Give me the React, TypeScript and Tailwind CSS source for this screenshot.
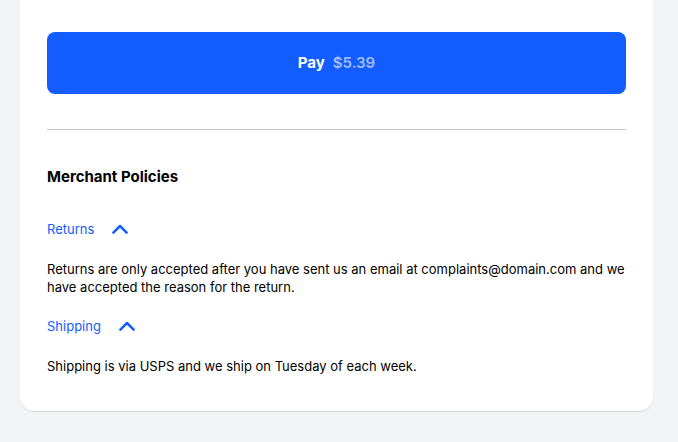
import { useState } from "react";

const policies = [
  {
    name: "Returns",
    text: "Returns are only accepted after you have sent us an email at complaints@domain.com and we have accepted the reason for the return.",
  },
  {
    name: "Shipping",
    text: "Shipping is via USPS and we ship on Tuesday of each week.",
  },
];

function Policy({ name, text }: { name: string; text: string }) {
  const [open, setOpen] = useState(true);

  return (
    <section>
      <button
        type="button"
        aria-expanded={open}
        onClick={() => setOpen(!open)}
        className="flex items-center gap-[18px] text-[13px] leading-[18px] text-[#135dff] cursor-pointer"
      >
        {name}
        <svg
          viewBox="0 0 16 10"
          className={open ? "w-4 h-[10px]" : "w-4 h-[10px] rotate-180"}
          fill="none"
          stroke="currentColor"
          strokeWidth="2.5"
          strokeLinecap="round"
          strokeLinejoin="round"
          aria-hidden="true"
        >
          <path d="M1.4 8.6L8 2L14.6 8.6" />
        </svg>
      </button>
      {open && <p className="mt-[22px] text-[13px] leading-[18px]">{text}</p>}
    </section>
  );
}

export default function App() {
  return (
    <div className="min-h-screen bg-[#f3f4f6] pl-5 pr-[25px] pb-8 font-['Inter',sans-serif] text-black">
      <main className="bg-white rounded-b-[14px] px-[27px] pt-8 pb-9 shadow-[0_1px_1px_rgba(0,0,0,0.12)]">
        {/* Payment */}
        <button
          type="button"
          className="flex w-full items-center justify-center gap-2 rounded-lg bg-[#135dff] py-[19px] text-[15px] leading-6 font-bold text-white cursor-pointer"
        >
          Pay <span className="font-semibold text-[#a1beff]">$5.39</span>
        </button>

        <hr className="mt-[35px] border-t border-[#c9c9cb]" />

        {/* Policies */}
        <h2 className="mt-[35px] text-[15px] leading-6 font-bold">Merchant Policies</h2>
        <div className="mt-[31px] flex flex-col gap-[21px]">
          {policies.map((policy) => (
            <Policy key={policy.name} name={policy.name} text={policy.text} />
          ))}
        </div>
      </main>
    </div>
  );
}
